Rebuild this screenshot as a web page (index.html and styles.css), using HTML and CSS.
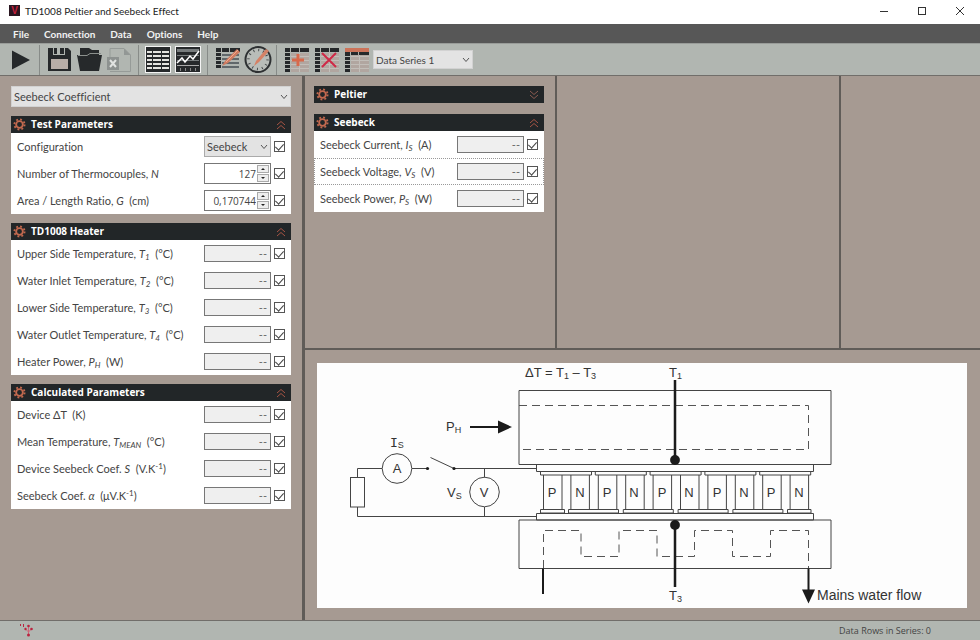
FILE: index.html
```html
<!DOCTYPE html>
<html lang="en">
<head>
<meta charset="utf-8">
<title>TD1008 Peltier and Seebeck Effect</title>
<link rel="stylesheet" href="styles.css">
</head>
<body>
<svg class="defs" aria-hidden="true">
  <symbol id="gear" viewBox="0 0 14 14">
    <circle cx="7" cy="7" r="5.500" fill="none" stroke="#c2694f" stroke-width="2" stroke-dasharray="2 2.320"/>
    <circle cx="7" cy="7" r="3.600" fill="none" stroke="#c2694f" stroke-width="2"/>
  </symbol>
  <symbol id="up" viewBox="0 0 10 10"><path d="M1 5 5 1.500 9 5M1 9 5 5.500 9 9" fill="none" stroke="#a65444"/></symbol>
  <symbol id="down" viewBox="0 0 10 10"><path d="M1 1 5 4.500 9 1M1 5 5 8.500 9 5" fill="none" stroke="#8a5a50"/></symbol>
  <symbol id="chev" viewBox="0 0 8 6"><path d="M1 1 4 4.500 7 1" fill="none" stroke="#555"/></symbol>
  <symbol id="grid" viewBox="0 0 24 24">
    <path d="M0 2H5M6 2H14M15 2H24" stroke="#25282a" stroke-width="4"/>
    <path d="M2.500 5V24" stroke="#25282a" stroke-width="5" stroke-dasharray="3 1"/>
    <path d="M6 5H24V24H6Z" fill="#b1a6a0"/>
    <path d="M6 8.500H24M6 12.500H24M6 16.500H24M6 20.500H24M14.500 5V24" stroke="#c2beb9"/>
  </symbol>
</svg>

<header class="titlebar">
  <svg class="logo" viewBox="0 0 12 12"><rect width="12" height="12" fill="#2a1620"/><text x="6" y="10" text-anchor="middle" font-size="11" font-weight="bold" fill="#c41f3c">V</text></svg>
  <h1>TD1008 Peltier and Seebeck Effect</h1>
  <div class="winbtns">
    <button aria-label="Minimize"><svg viewBox="0 0 10 10"><path d="M1 5.500H9" stroke="#333"/></svg></button>
    <button aria-label="Maximize"><svg viewBox="0 0 10 10"><rect x="1.500" y="1.500" width="7" height="7" fill="none" stroke="#333"/></svg></button>
    <button aria-label="Close"><svg viewBox="0 0 10 10"><path d="M1 1 9 9M9 1 1 9" stroke="#333"/></svg></button>
  </div>
</header>

<nav class="menubar">
  <button>File</button><button>Connection</button><button>Data</button><button>Options</button><button>Help</button>
</nav>

<div class="toolbar">
  <button aria-label="Run"><svg viewBox="0 0 30 28"><path d="M6 4.500 24 14 6 23.500Z" fill="#26292b"/></svg></button>
  <span class="sep"></span>
  <button aria-label="Save"><svg viewBox="0 0 30 28"><path d="M3 2H23L26 5V25H3Z" fill="#26292b"/><path d="M8 1H20V9H8Z" fill="#b1b6b1"/><path d="M9 2H12V8H9ZM15 2H19V8H15Z" fill="#26292b"/><path d="M6 13H23V23H6Z" fill="#b8aea8"/></svg></button>
  <button aria-label="Open"><svg viewBox="0 0 30 28"><path d="M5 9V2H14L17 4H24V9H27L24 25H5L2 9Z" fill="#26292b"/><path d="M3 9.500H12L15 7.500H26" fill="none" stroke="#8b908d"/></svg></button>
  <button aria-label="Export to spreadsheet" disabled><svg viewBox="0 0 30 28"><path d="M5 11V2.500H19L25.500 9V25.500H5" fill="none" stroke="#969b98"/><path d="M19 2.500V9H25.500Z" fill="#929795"/><rect x="2" y="11" width="12" height="13" fill="#8d9290"/><path d="M5 14 11 21M11 14 5 21" stroke="#e1e3e1" stroke-width="2"/></svg></button>
  <span class="sep"></span>
  <button aria-label="Table view"><svg viewBox="0 0 30 28"><rect x="1.500" y="0.500" width="25" height="26" fill="#26292b" stroke="#f4f4f4"/><path d="M3 6H8M9 6H17M18 6H25M3 10H8M9 10H17M18 10H25M3 14H8M9 14H17M18 14H25M3 18H8M9 18H17M18 18H25M3 22H8M9 22H17M18 22H25" stroke="#e4e4e0" stroke-width="2"/></svg></button>
  <button aria-label="Chart view"><svg viewBox="0 0 30 28"><rect x="1.500" y="0.500" width="25" height="26" fill="#26292b" stroke="#f4f4f4"/><rect x="3" y="3" width="22" height="3" fill="#777c7d"/><path d="M3 9.500H25M3 14.500H25" stroke="#777c7d"/><path d="M3 17 8 12 11 16 16 10 19 13 25 5" fill="none" stroke="#fff" stroke-width="1.500"/><path d="M3 19.500H25" stroke="#aaa"/><path d="M6.500 22V25M11.500 22V25M16.500 22V25M21.500 22V25" stroke="#888"/></svg></button>
  <span class="sep"></span>
  <button aria-label="Edit table"><svg viewBox="0 0 30 28"><path d="M3 4H8M9 4H16M17 4H27" stroke="#26292b" stroke-width="4"/><path d="M3 8.500H8M3 12.500H8M3 16.500H8M3 20.500H8" stroke="#26292b" stroke-width="3"/><path d="M9 9H26M9 13H26M9 17H26M9 21H26" stroke="#61686b" stroke-width="2"/><path d="M12 15 24 3 27 6 15 17 9 20Z" fill="#cf7b60"/><path d="M13 16 25 4" stroke="#edaa90"/></svg></button>
  <button aria-label="Edit timing"><svg viewBox="0 0 30 28"><circle cx="15" cy="13.500" r="12.500" fill="#b9bdb9" stroke="#2d3032" stroke-width="2"/><circle cx="15" cy="13.500" r="9.500" fill="none" stroke="#44484a" stroke-width="2.500" stroke-dasharray="1 3.970"/><path d="M13 15 23 3 26 5 16 16 11 20Z" fill="#d58165"/></svg></button>
  <span class="sep"></span>
  <button aria-label="Add series"><svg viewBox="0 0 30 28"><use href="#grid" x="3" y="2" width="24" height="24"/><path d="M16 8V20M10 14H22" stroke="#d8694b" stroke-width="3"/></svg></button>
  <button aria-label="Delete series"><svg viewBox="0 0 30 28"><use href="#grid" x="3" y="2" width="24" height="24"/><path d="M10 7 24 21M24 7 10 21" stroke="#cf2947" stroke-width="2"/></svg></button>
  <button aria-label="Rename series"><svg viewBox="0 0 30 28"><use href="#grid" x="3" y="2" width="24" height="24"/><path d="M3 2H27V6H3Z" fill="#cc7359"/><path d="M3 7.500H8M9 7.500H16M17 7.500H27" stroke="#26292b" stroke-width="3"/></svg></button>
  <span class="select series"><select aria-label="Data series"><option>Data Series 1</option></select><svg><use href="#chev"/></svg></span>
</div>

<main class="work">
  <aside class="side">
    <span class="select mode"><select aria-label="Experiment"><option>Seebeck Coefficient</option></select><svg><use href="#chev"/></svg></span>

    <section class="group">
      <h2><svg class="gear"><use href="#gear"/></svg>Test Parameters<button aria-label="Collapse"><svg><use href="#up"/></svg></button></h2>
      <div class="row"><label for="cfg">Configuration</label><span class="select cfg"><select id="cfg"><option>Seebeck</option></select><svg><use href="#chev"/></svg></span><input type="checkbox" checked aria-label="Show Configuration"></div>
      <div class="row"><label for="num">Number of Thermocouples, <i>N</i></label><span class="spin"><input id="num" type="text" value="127"><span class="steps"><button aria-label="Increase"></button><button class="dn" aria-label="Decrease"></button></span></span><input type="checkbox" checked aria-label="Show Number of Thermocouples"></div>
      <div class="row"><label for="ratio">Area / Length Ratio, <i>G</i> &nbsp;(cm)</label><span class="spin"><input id="ratio" type="text" value="0,170744"><span class="steps"><button aria-label="Increase"></button><button class="dn" aria-label="Decrease"></button></span></span><input type="checkbox" checked aria-label="Show Area / Length Ratio"></div>
    </section>

    <section class="group">
      <h2><svg class="gear"><use href="#gear"/></svg>TD1008 Heater<button aria-label="Collapse"><svg><use href="#up"/></svg></button></h2>
      <div class="row"><label for="t1">Upper Side Temperature, <i>T<sub>1</sub></i> &nbsp;(°C)</label><input class="val" id="t1" value="--" readonly><input type="checkbox" checked aria-label="Show T1"></div>
      <div class="row"><label for="t2">Water Inlet Temperature, <i>T<sub>2</sub></i> &nbsp;(°C)</label><input class="val" id="t2" value="--" readonly><input type="checkbox" checked aria-label="Show T2"></div>
      <div class="row"><label for="t3">Lower Side Temperature, <i>T<sub>3</sub></i> &nbsp;(°C)</label><input class="val" id="t3" value="--" readonly><input type="checkbox" checked aria-label="Show T3"></div>
      <div class="row"><label for="t4">Water Outlet Temperature, <i>T<sub>4</sub></i> &nbsp;(°C)</label><input class="val" id="t4" value="--" readonly><input type="checkbox" checked aria-label="Show T4"></div>
      <div class="row"><label for="ph">Heater Power, <i>P<sub>H</sub></i> &nbsp;(W)</label><input class="val" id="ph" value="--" readonly><input type="checkbox" checked aria-label="Show Heater Power"></div>
    </section>

    <section class="group">
      <h2><svg class="gear"><use href="#gear"/></svg>Calculated Parameters<button aria-label="Collapse"><svg><use href="#up"/></svg></button></h2>
      <div class="row"><label for="dt">Device ΔT &nbsp;(K)</label><input class="val" id="dt" value="--" readonly><input type="checkbox" checked aria-label="Show Device ΔT"></div>
      <div class="row"><label for="tm">Mean Temperature, <i>T<sub>MEAN</sub></i> &nbsp;(°C)</label><input class="val" id="tm" value="--" readonly><input type="checkbox" checked aria-label="Show Mean Temperature"></div>
      <div class="row"><label for="ds">Device Seebeck Coef. <i>S</i> &nbsp;(V.K<sup>-1</sup>)</label><input class="val" id="ds" value="--" readonly><input type="checkbox" checked aria-label="Show Device Seebeck Coefficient"></div>
      <div class="row"><label for="sc">Seebeck Coef. <i>α</i> &nbsp;(μV.K<sup>-1</sup>)</label><input class="val" id="sc" value="--" readonly><input type="checkbox" checked aria-label="Show Seebeck Coefficient"></div>
    </section>
  </aside>

  <div class="right">
    <div class="panes">
      <div class="pane">
        <section class="group">
          <h2><svg class="gear"><use href="#gear"/></svg>Peltier<button aria-label="Expand"><svg><use href="#down"/></svg></button></h2>
        </section>
        <section class="group">
          <h2><svg class="gear"><use href="#gear"/></svg>Seebeck<button aria-label="Collapse"><svg><use href="#up"/></svg></button></h2>
          <div class="row"><label for="is">Seebeck Current, <i>I<sub>S</sub></i> &nbsp;(A)</label><input class="val" id="is" value="--" readonly><input type="checkbox" checked aria-label="Show Seebeck Current"></div>
          <div class="row focus"><label for="vs">Seebeck Voltage, <i>V<sub>S</sub></i> &nbsp;(V)</label><input class="val" id="vs" value="--" readonly><input type="checkbox" checked aria-label="Show Seebeck Voltage"></div>
          <div class="row"><label for="ps">Seebeck Power, <i>P<sub>S</sub></i> &nbsp;(W)</label><input class="val" id="ps" value="--" readonly><input type="checkbox" checked aria-label="Show Seebeck Power"></div>
        </section>
      </div>
      <div class="pane"></div>
      <div class="pane"></div>
    </div>

    <div class="figure">
      <svg class="diagram" viewBox="317 363 650 245" role="img" aria-label="Seebeck circuit diagram">
        <defs>
          <g id="leg"><path d="M543.500 475V509M562 475V509"/></g>
          <path id="cap" d="M540.500 471.500H591.500V475H540.500Z"/>
          <path id="foot" d="M568.500 509.500H618.500V513H568.500Z"/>
        </defs>
        <g class="line">
          <path d="M519 390.500H831V464.500H519ZM536.500 464.500H813.500V471.500H536.500ZM536.500 513.500H813.500V520H536.500ZM519 520H831V568.500H519Z"/>
          <use href="#cap"/><use href="#cap" x="54.800"/><use href="#cap" x="109.600"/><use href="#cap" x="164.400"/><use href="#cap" x="219.200"/>
          <path d="M540.500 509.500H564.500V513H540.500ZM787.500 509.500H811V513H787.500Z"/>
          <use href="#foot"/><use href="#foot" x="54.800"/><use href="#foot" x="109.600"/><use href="#foot" x="164.400"/>
          <use href="#leg"/><use href="#leg" x="27.400"/><use href="#leg" x="54.800"/><use href="#leg" x="82.200"/><use href="#leg" x="109.600"/><use href="#leg" x="137"/><use href="#leg" x="164.400"/><use href="#leg" x="191.800"/><use href="#leg" x="219.200"/><use href="#leg" x="246.600"/>
          <path d="M382 468.500H357.500V477.500M357.500 507V516.500H536.500M412 468.500H427M454 468.500H536.500M484.500 468.500V477.500M484.500 507V516.500M430.500 457.500 454 468.500"/>
          <rect x="350.500" y="477.500" width="14" height="29.500"/>
          <circle cx="397" cy="468.500" r="14.800"/><circle cx="484.500" cy="492" r="14.800"/>
        </g>
        <g class="dash">
          <path d="M519 405.500H808.500V449.500H519"/>
          <path d="M543.500 568V530.500H581V556.500H619V530.500H657V556.500H694.500V530.500H732.500V556.500H770.500V530.500H808.500V568"/>
        </g>
        <g class="thick">
          <path d="M543 568.500V594M808.500 568.500V591M470 427H499" stroke-width="2"/>
          <path d="M675 380V460M675 525V587" stroke-width="2.500"/>
        </g>
        <g fill="#1b1b1b">
          <circle cx="675" cy="460" r="4.900"/><circle cx="675" cy="525" r="4.900"/>
          <circle cx="427.500" cy="468.500" r="1.600"/><circle cx="454" cy="468.500" r="1.600"/>
          <path d="M498 420.500 512 427 498 433.500ZM802 589.500H815L808.500 603.500Z"/>
        </g>
        <g class="txt">
          <text x="525" y="377">ΔT = T<tspan class="s" dy="2">1</tspan><tspan dy="-2"> – T</tspan><tspan class="s" dy="2">3</tspan></text>
          <text x="669" y="377">T<tspan class="s" dy="2">1</tspan></text>
          <text x="669" y="600">T<tspan class="s" dy="2">3</tspan></text>
          <text x="446" y="431">P<tspan class="s" dy="2">H</tspan></text>
          <text x="390" y="447"><tspan class="mono">I</tspan><tspan class="s" dy="1">S</tspan></text>
          <text x="447" y="497">V<tspan class="s" dy="2">S</tspan></text>
          <text class="big" x="817" y="600">Mains water flow</text>
          <g text-anchor="middle">
            <text x="397" y="473">A</text><text x="484" y="497">V</text>
            <text x="552" y="497">P</text><text x="580" y="497">N</text><text x="607" y="497">P</text><text x="634" y="497">N</text><text x="662" y="497">P</text><text x="689" y="497">N</text><text x="717" y="497">P</text><text x="744" y="497">N</text><text x="771" y="497">P</text><text x="799" y="497">N</text>
          </g>
        </g>
      </svg>
    </div>
  </div>
</main>

<footer class="status">
  <svg viewBox="0 0 14 14"><path d="M8.500 4V12M5.500 5 8.500 8 11.500 5M8.500 2V4" fill="none" stroke="#d0677a"/><g fill="#b9243f"><circle cx="8.500" cy="2" r="1.300"/><circle cx="5.500" cy="5" r="1.200"/><circle cx="11.500" cy="5" r="1.300"/><circle cx="8.500" cy="11" r="1.500"/><path d="M0 0H1V2H0ZM3 0H4V3H3Z"/></g></svg>
  <span>Data Rows in Series: 0</span>
</footer>
</body>
</html>
```
FILE: styles.css
```css
* { box-sizing: border-box; }

body {
  margin: 0;
  min-height: 100vh;
  display: flex;
  flex-direction: column;
  background: #a69a92;
  color: #444;
  font: 11px/16px Lato, "Open Sans", sans-serif;
  font-variant-ligatures: none;
}

button, input, select { font: inherit; color: inherit; margin: 0; padding: 0; }
button { border: 0; background: none; display: flex; align-items: center; justify-content: center; }
svg { display: block; }
.defs { display: none; }

.titlebar { display: flex; align-items: center; height: 24px; padding: 0 1px 3px 9px; background: #fff; }
.logo { width: 11px; height: 11px; margin-right: 5px; font-family: "Liberation Sans", sans-serif; }
.titlebar h1 { margin: 0; font-size: 10px; font-weight: 400; color: #222; }
.winbtns { display: flex; margin-left: auto; }
.winbtns button { width: 38px; height: 20px; }
.winbtns svg { width: 10px; height: 10px; }

.menubar { display: flex; gap: 15px; height: 19px; padding: 0 13px; background: #575757; color: #f2f2f2; font-size: 10px; font-weight: 700; }

.toolbar { display: flex; align-items: center; height: 33px; padding-left: 6px; background: #b1b6b1; border-top: 1px solid #999c99; border-bottom: 1px solid #716e6a; }
.toolbar button { width: 30px; height: 28px; }
.toolbar button svg { width: 30px; height: 28px; }
.sep { width: 1px; height: 30px; margin: 0 5px 0 3px; background: #878b88; }

.select { position: relative; display: block; }
.select select { appearance: none; width: 100%; height: 100%; display: block; border: 1px solid #d2d2d2; border-radius: 0; background: #e3e3e3; padding: 0 2px; }
.select svg { position: absolute; right: 3px; top: calc(50% - 3px); width: 8px; height: 6px; pointer-events: none; }
.series { width: 100px; height: 19px; margin-left: 1px; font-size: 10px; }

.work { flex: 1; display: grid; grid-template-columns: 305px 1fr; }
.side { border-right: 3px solid #605c58; padding: 10px 11px; display: flex; flex-direction: column; gap: 9px; }
.mode { height: 21px; }
.right { display: grid; grid-template-rows: 274px 1fr; }
.panes { display: grid; grid-template-columns: 252px 284fr 139fr; border-bottom: 2px solid #605c58; }
.pane { padding: 10px 11px 10px 9px; display: flex; flex-direction: column; gap: 11px; border-right: 2px solid #605c58; }
.pane:last-child { border-right: 0; }

.group h2 { display: flex; align-items: center; margin: 0; height: 17px; padding: 0 5px 0 2px; background: #222628; color: #fff; font: 700 10px/17px "Open Sans", "Noto Sans", sans-serif; }
.gear { width: 13px; height: 13px; margin-right: 5px; }
.group h2 button { margin-left: auto; }
.group h2 button svg { width: 10px; height: 10px; }

.row { display: flex; align-items: center; height: 27px; padding: 0 6px; background: #fff; }
.row.focus { outline: 1px dotted #999; outline-offset: -1px; }
.row label { flex: 1; white-space: nowrap; }
sub, sup { font-size: 8px; line-height: 0; }
sub { vertical-align: -2px; }
sup { vertical-align: 4px; }

.val { width: 67px; height: 17px; border: 1px solid #777; border-radius: 0; background: #efefef; padding: 0 3px; text-align: right; color: #666; }
.cfg { width: 67px; height: 21px; }
.cfg select { border-color: #aaa; }
.spin { display: flex; align-items: center; width: 67px; height: 21px; border: 1px solid #777; background: #fff; padding-right: 1px; font: 10px/16px "Open Sans", "Noto Sans", sans-serif; }
.spin input { flex: 1; min-width: 0; border: 0; text-align: right; padding-right: 1px; background: none; }
.steps { display: grid; gap: 1px; }
.steps button { width: 12px; height: 8px; border: 1px solid #aaa; background: #eee; }
.steps button::before { content: ""; border: 2px solid transparent; border-top: 0; border-bottom-color: #222; }
.steps .dn::before { transform: rotate(180deg); }

input[type="checkbox"] { appearance: none; width: 11px; height: 11px; margin-left: 3px; border: 1px solid #555; background: #fff; display: flex; justify-content: center; }
input[type="checkbox"]:checked::before { content: ""; width: 4px; height: 7px; border: solid #444; border-width: 0 1px 1px 0; transform: rotate(42deg); }

.figure { padding: 13px 13px 12px 12px; }
.diagram { width: 100%; height: auto; background: #fdfdfd; }
.line { fill: none; stroke: #444; stroke-width: 1; }
.dash { fill: none; stroke: #555; stroke-width: 1; stroke-dasharray: 8 5; }
.thick { fill: none; stroke: #1b1b1b; }
.txt { font: 13px "Liberation Sans", Arial, sans-serif; fill: #333; }
.txt .s { font-size: 9px; }
.txt .mono { font-family: "DejaVu Sans Mono", monospace; }
.txt .big { font-size: 14px; }

.status { display: flex; align-items: center; justify-content: space-between; height: 20px; padding: 0 49px 0 20px; background: #b1b6b1; border-top: 1px solid #716e6a; font: 9px/16px "Open Sans", "Noto Sans", sans-serif; }
.status svg { width: 14px; height: 14px; }
```
